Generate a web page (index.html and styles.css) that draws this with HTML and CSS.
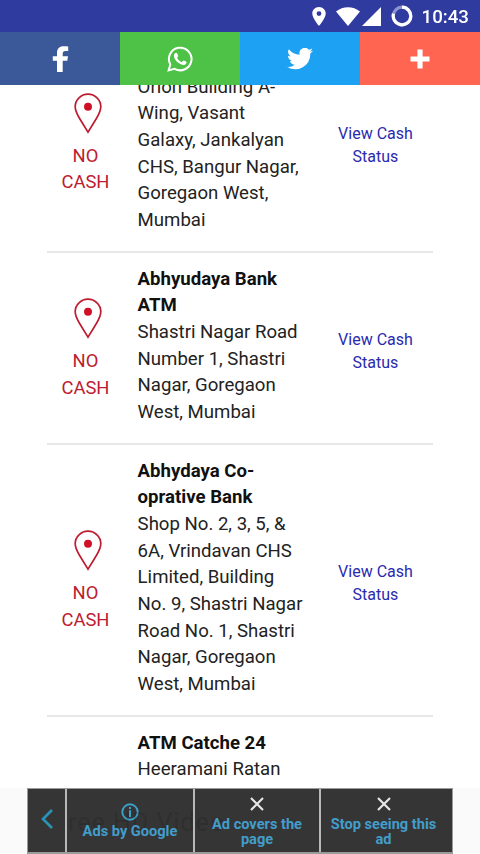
FILE: index.html
```html
<!DOCTYPE html>
<html lang="en">
<head>
<meta charset="utf-8">
<title>ATM cash status</title>
<link rel="stylesheet" href="styles.css">
</head>
<body>
<svg class="defs" width="0" height="0" aria-hidden="true">
  <symbol id="pin" viewBox="0 0 28 41">
    <path d="M14 1.200C7.100 1.200 1.200 6.600 1.200 13.600C1.200 18 3.200 21.500 5.300 25L14 39.200L22.700 25C24.800 21.500 26.800 18 26.800 13.600C26.800 6.600 20.900 1.200 14 1.200Z" fill="none" stroke="#bd1c30" stroke-width="1.700"/>
    <circle cx="14" cy="13.700" r="4" fill="#cf1027"/>
  </symbol>
</svg>
<div class="screen">
  <header class="top">
    <div class="status">
      <svg class="loc" viewBox="0 0 14 19"><path fill-rule="evenodd" d="M7 0C3 0 .3 3 .3 6.600C.3 11.500 7 19 7 19S13.700 11.500 13.700 6.600C13.700 3 11 0 7 0ZM7 4.200A2.400 2.400 0 1 1 7 9A2.400 2.400 0 0 1 7 4.200Z"/></svg>
      <svg class="wifi" viewBox="0 0 24 19"><path d="M0 4.500C7-1.200 17-1.200 24 4.500L12 19Z"/></svg>
      <svg class="signal" viewBox="0 0 19 19"><path d="M19 0V19H0Z"/></svg>
      <svg class="ring" viewBox="0 0 22 22"><circle cx="11" cy="11" r="8.800" fill="none" stroke="#8d93cf" stroke-width="3.200"/><path d="M11 2.200A8.800 8.800 0 1 1 2.500 8.700" fill="none" stroke="#fff" stroke-width="3.200"/></svg>
      <span class="clock">10:43</span>
    </div>
    <nav class="share">
      <a class="fb"><svg width="17" height="26" viewBox="0 0 17 26"><path d="M5 26V14.800H.8V10.200H5V7C5 2.700 7.500.3 11.400.3C13.300.3 15.900.5 16.200.6V5H13.400C11.400 5 10.700 5.900 10.700 7.400V10.200H16L15.300 14.800H10.700V26Z"/></svg></a>
      <a class="wa"><svg width="26" height="26" viewBox="0 0 26 26"><path d="M1.600 24.400L3.300 18.400A11.300 11.300 0 1 1 7.600 22.800Z" fill="none" stroke="#fff" stroke-width="2"/><path d="M9.200 6.800C8.500 6.600 6.900 7.800 6.900 9.800C6.900 13.900 12.500 19 16.600 19C18.500 19 19.800 17.500 19.600 16C19.600 15.500 17 14.400 16.500 14.400C16 14.400 15.300 16.200 14.700 16.100C13 15.600 10.900 13.500 10.200 12C10 11.400 11.300 10.600 11.200 10C11 9 10.100 6.900 9.200 6.800Z"/></svg></a>
      <a class="tw"><svg width="26" height="22" viewBox="0 0 24 20"><path d="M24 2.400C23.100 2.800 22.200 3 21.200 3.200C22.200 2.500 22.900 1.600 23.300.4C22.300.9 21.300 1.300 20.200 1.500A4.900 4.900 0 0 0 11.700 6A14 14 0 0 1 1.700.9A4.900 4.900 0 0 0 3.200 7.500C2.400 7.500 1.600 7.200.9 6.900C.9 9.300 2.600 11.300 4.900 11.800C4.200 12 3.400 12 2.700 11.800C3.300 13.800 5.100 15.200 7.300 15.200A9.900 9.900 0 0 1 0 17.200A14 14 0 0 0 21.500 4.900C22.500 4.200 23.300 3.300 24 2.400Z"/></svg></a>
      <a class="more"><svg width="20" height="20" viewBox="0 0 20 20"><path d="M7.400.5H12.600V7.400H19.500V12.600H12.600V19.500H7.400V12.600H.5V7.400H7.400Z"/></svg></a>
    </nav>
  </header>

  <main class="list">
    <section class="row partial">
      <div class="cash"><svg class="pin"><use href="#pin"/></svg><span>NO<br>CASH</span></div>
      <div class="address">Orion Building A-<br>Wing, Vasant<br>Galaxy, Jankalyan<br>CHS, Bangur Nagar,<br>Goregaon West,<br>Mumbai</div>
      <a class="view">View Cash<br>Status</a>
    </section>
    <section class="row">
      <div class="cash"><svg class="pin"><use href="#pin"/></svg><span>NO<br>CASH</span></div>
      <div class="address"><b>Abhyudaya Bank<br>ATM</b><br>Shastri Nagar Road<br>Number 1, Shastri<br>Nagar, Goregaon<br>West, Mumbai</div>
      <a class="view">View Cash<br>Status</a>
    </section>
    <section class="row">
      <div class="cash"><svg class="pin"><use href="#pin"/></svg><span>NO<br>CASH</span></div>
      <div class="address"><b>Abhydaya Co-<br>oprative Bank</b><br>Shop No. 2, 3, 5, &amp;<br>6A, Vrindavan CHS<br>Limited, Building<br>No. 9, Shastri Nagar<br>Road No. 1, Shastri<br>Nagar, Goregaon<br>West, Mumbai</div>
      <a class="view">View Cash<br>Status</a>
    </section>
    <section class="row">
      <div></div>
      <div class="address"><b>ATM Catche 24</b><br>Heeramani Ratan</div>
    </section>
  </main>

  <footer class="ad">
    <div class="options">
      <a class="opt back"><svg width="14" height="22" viewBox="0 0 14 22"><path d="M12 2L3 11L12 20" fill="none" stroke="#2b93b8" stroke-width="2.600"/></svg></a>
      <a class="opt"><svg width="18" height="18" viewBox="0 0 18 18"><circle cx="9" cy="9" r="7.700" fill="none" stroke="#3ba0ca" stroke-width="1.900"/><path d="M8 4H10V6H8ZM8 7.300H10V14H8Z" fill="#3ba0ca"/></svg><span>Ads by Google</span></a>
      <a class="opt"><svg class="x" width="14" height="14" viewBox="0 0 14 14"><path d="M1 1L13 13M13 1L1 13"/></svg><span>Ad covers the<br>page</span></a>
      <a class="opt last"><svg class="x" width="14" height="14" viewBox="0 0 14 14"><path d="M1 1L13 13M13 1L1 13"/></svg><span>Stop seeing this<br>ad</span></a>
    </div>
    <div class="ghost">ree HD Video</div>
  </footer>
</div>
</body>
</html>
```

FILE: styles.css
```css
* { box-sizing: border-box; }
body { margin: 0; background: #fff; font-family: Roboto, "Liberation Sans", sans-serif; }
.defs { position: absolute; }
.screen { height: 854px; overflow: hidden; }
.top { position: fixed; top: 0; left: 0; width: 480px; z-index: 2; }
.status {
  height: 32px; background: #303b9f; display: flex; align-items: center;
  justify-content: flex-end; padding-right: 11px; color: #fff;
}
.status svg { fill: #fff; }
.loc { width: 14px; height: 19px; margin-right: 10px; }
.wifi { width: 24px; height: 19px; margin-right: 2px; }
.signal { width: 19px; height: 19px; margin-right: 10px; }
.ring { width: 22px; height: 22px; margin-right: 9px; }
.clock { font-size: 18.7px; line-height: 32px; font-weight: 500; padding-top: 1px; }
.share { display: grid; grid-template-columns: repeat(4, 1fr); height: 53px; }
.share a { display: flex; align-items: center; justify-content: center; }
.share svg { fill: #fff; }
.fb { background: #3b5998; }
.wa { background: #4dc247; }
.tw { background: #1da1f2; }
.more { background: #ff6550; }

.list { padding: 34px 47px 0; }
.row {
  display: grid; grid-template-columns: 90.600px 199.400px 1fr; align-items: center;
  padding: 13px 0 17px; border-bottom: 2px solid #e8e8e8;
  font-size: 18.600px; line-height: 26.667px; color: #222;
}
.partial .address { padding-top: 26.667px; }
.row b { font-weight: 700; color: #111; }
.cash { width: 77px; padding-top: 8px; display: flex; flex-direction: column; align-items: center; text-align: center; font-size: 18.400px; color: #bd1c30; }
.pin { width: 28px; height: 41px; margin: 0 0 9px 5px; }
.view { width: 77px; padding-top: 10px; text-align: center; white-space: nowrap; font-size: 16px; line-height: 23px; color: #2a2aae; }

.ad { position: fixed; left: 0; bottom: 0; width: 480px; height: 66px; background: #fafafa; padding: 0 27px; z-index: 1; }
.options {
  height: 66px; display: grid; grid-template-columns: 37px 126px 124px 1fr; gap: 2px;
  background: #b8b8b8; border: 1px solid #9a9a9a; border-bottom-width: 2px;
}
.opt {
  background: #353535; display: flex; flex-direction: column; align-items: center;
  padding-top: 14px; text-align: center; font-size: 14.600px; line-height: 15px; font-weight: 700; color: #439dcb;
}
.back { padding-top: 19px; }
.last { padding-right: 6px; }
.opt span { position: relative; z-index: 2; margin-top: 3px; white-space: nowrap; }
.x { margin-top: -6px; fill: none; stroke: #e6e6e6; stroke-width: 2.200; }
.x + span { margin-top: 6px; }
.ghost {
  position: absolute; left: 68px; top: 20px; z-index: 1;
  font-size: 25px; line-height: 30px; letter-spacing: 1px; color: rgba(0, 0, 0, .13);
}
```
